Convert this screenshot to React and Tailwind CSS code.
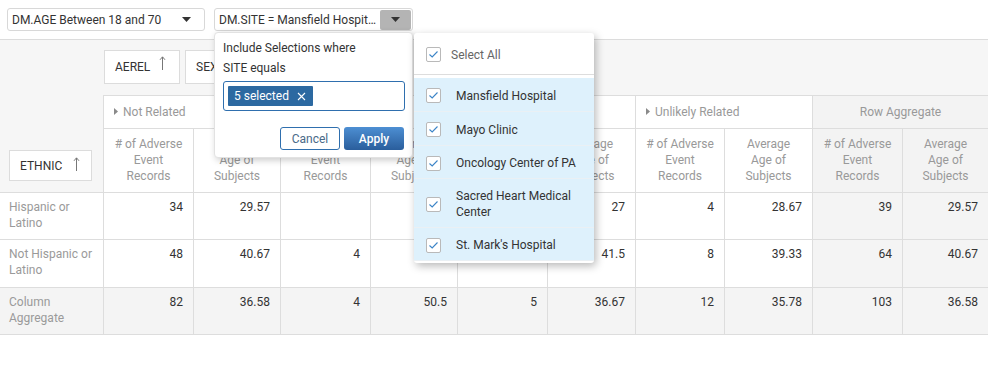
import React from "react";

const COLS = "grid-cols-[103px_90px_87px_90px_87px_90px_88px_89px_88px_90px_86px]";

function Caret({ className = "" }) {
  return (
    <svg width="9" height="5" viewBox="0 0 9 5" className={className}>
      <path d="M0 0 L9 0 L4.5 5 Z" fill="#333" />
    </svg>
  );
}

function UpArrow() {
  return (
    <svg width="7" height="14" viewBox="0 0 7 14" className="block">
      <path d="M3.5 1 L3.5 14" stroke="#777" strokeWidth="1" />
      <path d="M1 3.8 L3.5 0.8 L6 3.8" stroke="#777" strokeWidth="1" fill="none" />
    </svg>
  );
}

function Check() {
  return (
    <div className="w-[15px] h-[15px] shrink-0 bg-white border border-[#b9b9b9] rounded-[2px] flex items-center justify-center">
      <svg width="11" height="9" viewBox="0 0 11 9">
        <path d="M1.5 4.5 L4.2 7 L9.5 1.5" stroke="#3b84c7" strokeWidth="1.1" fill="none" />
      </svg>
    </div>
  );
}

function Tri() {
  return (
    <svg width="4" height="7" viewBox="0 0 4 7" className="inline-block mr-[5px] relative top-[-1px]">
      <path d="M0 0 L4 3.5 L0 7 Z" fill="#8a8a8a" />
    </svg>
  );
}

const rows = [
  { label: ["Hispanic or", "Latino"], vals: ["34", "29.57", "", "", "1", "27", "4", "28.67", "39", "29.57"], h: "h-[47px]", agg: false },
  { label: ["Not Hispanic or", "Latino"], vals: ["48", "40.67", "4", "50.5", "4", "41.5", "8", "39.33", "64", "40.67"], h: "h-[48px]", agg: false },
  { label: ["Column", "Aggregate"], vals: ["82", "36.58", "4", "50.5", "5", "36.67", "12", "35.78", "103", "36.58"], h: "h-[47px]", agg: true },
];

const groups = [
  { name: "Not Related", tri: true },
  { name: "Possibly Related", tri: true },
  { name: "Probably Related", tri: true },
  { name: "Unlikely Related", tri: true },
  { name: "Row Aggregate", tri: false },
];

const sites = [
  { name: "Mansfield Hospital", h: "h-[34px]" },
  { name: "Mayo Clinic", h: "h-[34px]" },
  { name: "Oncology Center of PA", h: "h-[33px]" },
  { name: "Sacred Heart Medical Center", h: "h-[49px]" },
  { name: "St. Mark's Hospital", h: "h-[33px]" },
];

export default function App() {
  return (
    <div
      className="relative w-[988px] h-[381px] bg-white overflow-hidden text-[12px] leading-[16px]"
      style={{ fontFamily: "Roboto, 'Liberation Sans', sans-serif" }}
    >
      {/* top filter bar */}
      <div className="h-[40px] border-b border-[#dcdcdc] flex items-start pt-[8px] pl-[7px] gap-[9px]">
        <div className="w-[198px] h-[23px] border border-[#d8d8d8] rounded-[3px] flex items-center pl-[4px] pr-[13px] text-[#333]">
          <span className="flex-1">DM.AGE Between 18 and 70</span>
          <Caret />
        </div>
        <div className="w-[199px] h-[23px] border border-[#d8d8d8] rounded-[3px] flex items-center pl-[4px] pr-[1px] text-[#333]">
          <span className="flex-1 whitespace-nowrap overflow-hidden">DM.SITE = Mansfield Hospit…</span>
          <div className="w-[31px] h-[20px] bg-[#b4b4b4] rounded-[2px] flex items-center justify-center">
            <Caret />
          </div>
        </div>
      </div>

      {/* pivot column chips strip */}
      <div className="h-[55px] bg-[#f6f6f6] flex items-start pt-[10px] pl-[104px] gap-[5px]">
        <div className="w-[76px] h-[34px] bg-white border border-[#dcdcdc] flex items-center pl-[10px] gap-[9px] text-[#333]">
          <span>AEREL</span>
          <span className="relative top-[-4px]"><UpArrow /></span>
        </div>
        <div className="w-[63px] h-[34px] bg-white border border-[#dcdcdc] flex items-center pl-[10px] gap-[9px] text-[#333]">
          <span>SEX</span>
          <span className="relative top-[-4px]"><UpArrow /></span>
        </div>
      </div>

      {/* pivot table */}
      <div className={`grid ${COLS}`}>
        {/* header row 1 */}
        <div className="h-[34px] bg-[#f6f6f6]" />
        {groups.map((g) => (
          <div
            key={g.name}
            className={`col-span-2 h-[34px] border-t border-l border-b border-[#dddddd] flex items-center text-[#999] ${
              g.tri ? "bg-white pl-[10px]" : "bg-[#f3f3f3] justify-center"
            }`}
          >
            {g.tri && <Tri />}
            <span>{g.name}</span>
          </div>
        ))}

        {/* header row 2 */}
        <div className="h-[64px] bg-[#f6f6f6] border-b border-[#dddddd] flex items-end pl-[9px] pb-[11px]">
          <div className="w-[83px] h-[31px] bg-white border border-[#dcdcdc] flex items-center pl-[10px] gap-[11px] text-[#333]">
            <span>ETHNIC</span>
            <span className="relative top-[-2px]"><UpArrow /></span>
          </div>
        </div>
        {groups.map((g) =>
          [0, 1].map((k) => (
            <div
              key={g.name + k}
              className={`h-[64px] border-l border-b border-[#dddddd] pt-[7px] text-center text-[#999] ${
                g.tri ? "bg-white" : "bg-[#f3f3f3]"
              }`}
            >
              {k === 0 ? (
                <>
                  <div># of Adverse</div>
                  <div>Event</div>
                  <div>Records</div>
                </>
              ) : (
                <>
                  <div>Average</div>
                  <div>Age of</div>
                  <div>Subjects</div>
                </>
              )}
            </div>
          ))
        )}

        {/* data rows */}
        {rows.map((r) => (
          <React.Fragment key={r.label.join(" ")}>
            <div className={`${r.h} border-b border-[#dddddd] pl-[9px] pt-[6px] text-[#9a9a9a] ${r.agg ? "bg-[#f4f4f4]" : "bg-white"}`}>
              <div>{r.label[0]}</div>
              <div>{r.label[1]}</div>
            </div>
            {r.vals.map((v, i) => (
              <div
                key={i}
                className={`${r.h} border-l border-b border-[#dddddd] pt-[6px] pr-[10px] text-right text-[#333] ${
                  r.agg || i >= 8 ? "bg-[#f4f4f4]" : "bg-white"
                }`}
              >
                {v}
              </div>
            ))}
          </React.Fragment>
        ))}
      </div>

      {/* filter popup */}
      <div className="absolute left-[214px] top-[32px] w-[199px] h-[126px] bg-white rounded-[4px] border border-[#e2e2e2] shadow-[2px_2px_7px_rgba(0,0,0,0.22)] pl-[8px] pt-[5px] text-[#333]">
        <div className="h-[20px] flex items-center">Include Selections where</div>
        <div className="h-[20px] flex items-center">SITE equals</div>
        <div className="mt-[3px] w-[182px] h-[30px] border border-[#2f6fae] rounded-[3px] flex items-center pl-[4px]">
          <div className="h-[20px] bg-[#2c69a1] text-white flex items-center pl-[6px] pr-[7px] gap-[8px] rounded-[1px]">
            <span>5 selected</span>
            <svg width="9" height="9" viewBox="0 0 9 9">
              <path d="M1 1 L8 8 M8 1 L1 8" stroke="#fff" strokeWidth="1.1" />
            </svg>
          </div>
        </div>
        <div className="mt-[16px] flex justify-end gap-[4px] pr-[8px]">
          <div className="w-[60px] h-[23px] border border-[#2f6fae] rounded-[3px] bg-white flex items-center justify-center text-[#4a6a88]">
            Cancel
          </div>
          <div className="w-[60px] h-[23px] rounded-[3px] bg-gradient-to-b from-[#4d8fd3] to-[#2a5e9c] flex items-center justify-center text-white font-medium">
            Apply
          </div>
        </div>
      </div>

      {/* site list popup */}
      <div className="absolute left-[414px] top-[33px] w-[180px] h-[230px] bg-white rounded-[3px] shadow-[2px_3px_8px_rgba(0,0,0,0.28)]">
        <div className="h-[42px] border-b border-[#dddddd] flex items-center pl-[12px] pt-[2px] gap-[10px] text-[#666]">
          <Check />
          <span>Select All</span>
        </div>
        <div className="mt-[3px]">
          {sites.map((s) => (
            <div
              key={s.name}
              className={`${s.h} bg-[#def1fc] border-b border-[#eaf0f4] flex items-center pl-[12px] pt-[2px] gap-[15px] text-[#333]`}
            >
              <Check />
              <span className="w-[125px]">{s.name}</span>
            </div>
          ))}
        </div>
      </div>
    </div>
  );
}
